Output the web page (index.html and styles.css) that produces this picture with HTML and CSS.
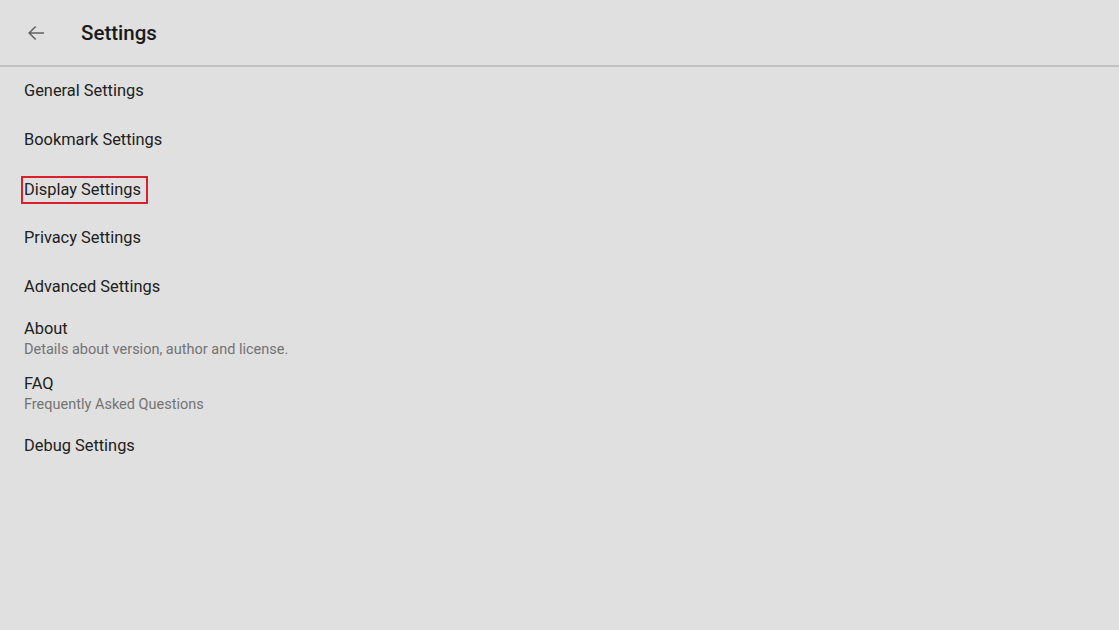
FILE: index.html
```html
<!DOCTYPE html>
<html lang="en">
<head>
  <meta charset="UTF-8" />
  <meta name="viewport" content="width=device-width, initial-scale=1.0"/>
  <title>Settings</title>
  <link rel="stylesheet" href="styles.css">
</head>
<body>
  <div class="toolbar">
    <button class="back-btn" aria-label="Back">
      <svg viewBox="0 0 24 24" width="24" height="24">
        <path d="M20 11.25H6.9l5.3-5.3L11.15 4.9 4.05 12l7.1 7.1 1.05-1.05-5.3-5.3H20z" fill="#616161"/>
      </svg>
    </button>
    <h1 class="title">Settings</h1>
  </div>

  <div class="pref-list">
    <div class="pref-item"><span class="pref-title">General Settings</span></div>
    <div class="pref-item"><span class="pref-title">Bookmark Settings</span></div>
    <div class="pref-item"><span class="pref-title focused">Display Settings</span></div>
    <div class="pref-item"><span class="pref-title">Privacy Settings</span></div>
    <div class="pref-item"><span class="pref-title">Advanced Settings</span></div>
    <div class="pref-item two-line">
      <span class="pref-title">About</span>
      <span class="pref-summary">Details about version, author and license.</span>
    </div>
    <div class="pref-item two-line">
      <span class="pref-title">FAQ</span>
      <span class="pref-summary">Frequently Asked Questions</span>
    </div>
    <div class="pref-item"><span class="pref-title">Debug Settings</span></div>
  </div>
</body>
</html>
```

FILE: styles.css
```css
body {
  margin: 0;
  padding: 0;
  height: 100vh;
  background-color: #e0e0e0;
  font-family: Roboto, "Liberation Sans", Arial, sans-serif;
  color: #212121;
}

.toolbar {
  height: 65px;
  display: flex;
  align-items: center;
  border-bottom: 2px solid #c2c2c2;
}

.back-btn {
  background: none;
  border: none;
  padding: 0;
  margin: 1px 0 0 24px;
  width: 24px;
  height: 24px;
  display: flex;
  cursor: pointer;
}

.title {
  margin: 1px 0 0 33px;
  font-size: 20.5px;
  font-weight: 500;
  color: #1a1a1a;
}

.pref-list {
  display: flex;
  flex-direction: column;
  margin-top: -1px;
}

.pref-item {
  height: 49px;
  display: flex;
  flex-direction: column;
  justify-content: center;
  padding-left: 24px;
}

.pref-item.two-line {
  height: 55px;
}

.pref-title {
  font-size: 16.4px;
  line-height: 21px;
  align-self: flex-start;
}

.pref-summary {
  font-size: 14.5px;
  line-height: 21px;
  color: #737373;
}

.pref-title.focused {
  border: 2px solid #d9202c;
  padding: 2px 5px 2px 1px;
  margin: 2px 0 0 -3px;
  line-height: 20px;
}
```
